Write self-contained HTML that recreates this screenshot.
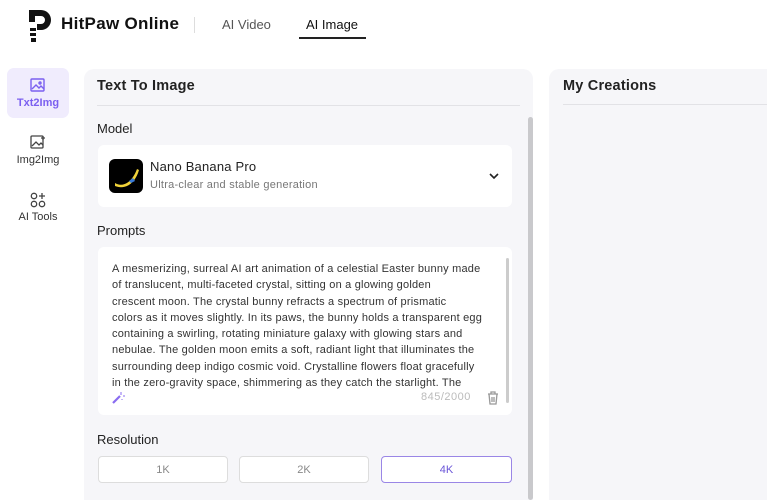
<!DOCTYPE html>
<html><head><meta charset="utf-8"><style>
*{box-sizing:border-box;margin:0;padding:0}
html,body{width:767px;height:500px;overflow:hidden}
body{background:#fff;font-family:"Liberation Sans",sans-serif;position:relative;color:#222}
.a{position:absolute}
</style></head><body>
<svg class="a" style="left:27px;top:8px" width="26" height="36" viewBox="0 0 26 36"><path d="M2 2h12a10 10 0 0 1 0 20h-4v-6h4a4 4 0 0 0 0-8H8v6H2z" fill="#111"/><path d="M3 20h6v3H3zM3 25h6v3H3zM4 30h5v4H4z" fill="#111"/></svg>
<div class="a" style="left:61px;top:14px;font-size:17px;font-weight:bold;color:#111;letter-spacing:0.3px">HitPaw Online</div>
<div class="a" style="left:194px;top:17px;width:1px;height:16px;background:#ddd"></div>
<div class="a" style="left:222px;top:17px;font-size:13px;color:#555">AI Video</div>
<div class="a" style="left:306px;top:17px;font-size:13px;color:#111">AI Image</div>
<div class="a" style="left:299px;top:37px;width:67px;height:2px;background:#222"></div>
<div class="a" style="left:7px;top:68px;width:62px;height:50px;background:#f0ecfd;border-radius:7px"></div>
<svg class="a" style="left:30px;top:78px" width="16" height="14" viewBox="0 0 16 14" fill="none" stroke="#7b5ff0" stroke-width="1.4"><rect x="1" y="1" width="13" height="12" rx="1"/><path d="M2 11l4-4 3 3 2-2 3 3"/><circle cx="10" cy="5" r="1"/></svg>
<div class="a" style="left:7px;top:97px;width:62px;text-align:center;font-size:11px;font-weight:bold;color:#7b5ff0">Txt2Img</div>
<svg class="a" style="left:30px;top:135px" width="16" height="14" viewBox="0 0 16 14" fill="none" stroke="#444" stroke-width="1.3"><rect x="1" y="1" width="12" height="12" rx="1"/><path d="M2 11l4-4 3 3 2-2 2 2"/><path d="M13 1v4M11 3h4"/></svg>
<div class="a" style="left:7px;top:154px;width:62px;text-align:center;font-size:11px;color:#333">Img2Img</div>
<svg class="a" style="left:30px;top:192px" width="16" height="16" viewBox="0 0 16 16" fill="none" stroke="#444" stroke-width="1.3"><circle cx="4" cy="4" r="2.7"/><circle cx="4" cy="12" r="2.7"/><circle cx="12" cy="12" r="2.7"/><path d="M12 1v6M9 4h6"/></svg>
<div class="a" style="left:7px;top:211px;width:62px;text-align:center;font-size:11px;color:#333">AI Tools</div>
<div class="a" style="left:84px;top:69px;width:449px;height:440px;background:#f6f6f9;border-radius:10px"></div>
<div class="a" style="left:97px;top:78px;font-size:14.5px;font-weight:bold;color:#222;letter-spacing:0.2px">Text To Image</div>
<div class="a" style="left:97px;top:105px;width:423px;height:1px;background:#e2e2e6"></div>
<div class="a" style="left:528px;top:117px;width:5px;height:383px;background:#c9c9cc;border-radius:3px"></div>
<div class="a" style="left:97px;top:121px;font-size:13px;color:#222">Model</div>
<div class="a" style="left:98px;top:145px;width:414px;height:62px;background:#fff;border-radius:6px"></div>
<div class="a" style="left:109px;top:159px;width:34px;height:34px;background:#000;border-radius:6px;overflow:hidden"><svg width="34" height="34" viewBox="0 0 34 34"><path d="M6 24c6 4 16 2 22-14l2 1c-4 14-14 20-24 16z" fill="#f1d33a"/><path d="M20 22l4-3 2 3-4 2z" fill="#3a7ad8"/></svg></div>
<div class="a" style="left:150px;top:159px;font-size:13px;color:#222;letter-spacing:0.2px">Nano Banana Pro</div>
<div class="a" style="left:150px;top:179px;font-size:11px;color:#777;letter-spacing:0.25px">Ultra-clear and stable generation</div>
<svg class="a" style="left:489px;top:173px" width="10" height="7" viewBox="0 0 10 7" fill="none" stroke="#222" stroke-width="1.6"><path d="M1 1l4 4 4-4"/></svg>
<div class="a" style="left:97px;top:223px;font-size:13px;color:#222">Prompts</div>
<div class="a" style="left:98px;top:247px;width:414px;height:168px;background:#fff;border-radius:6px"></div>
<div class="a" style="left:112px;top:261px;width:392px;font-size:11px;line-height:16.3px;color:#333;letter-spacing:0.2px">A mesmerizing, surreal AI art animation of a celestial Easter bunny made<br>of translucent, multi-faceted crystal, sitting on a glowing golden<br>crescent moon. The crystal bunny refracts a spectrum of prismatic<br>colors as it moves slightly. In its paws, the bunny holds a transparent egg<br>containing a swirling, rotating miniature galaxy with glowing stars and<br>nebulae. The golden moon emits a soft, radiant light that illuminates the<br>surrounding deep indigo cosmic void. Crystalline flowers float gracefully<br>in the zero-gravity space, shimmering as they catch the starlight. The</div>
<div class="a" style="left:506px;top:258px;width:3px;height:145px;background:#ccc;border-radius:2px"></div>
<svg class="a" style="left:111px;top:391px" width="14" height="14" viewBox="0 0 14 14"><path d="M2 12l7-7" stroke="#8a6cf0" stroke-width="2.2"/><path d="M10 1v3M12 5h2M11 8v1" stroke="#8a6cf0" stroke-width="1"/></svg>
<div class="a" style="left:421px;top:391px;font-size:11px;color:#bbb;letter-spacing:0.5px">845/2000</div>
<svg class="a" style="left:487px;top:391px" width="12" height="14" viewBox="0 0 12 14" fill="none" stroke="#999" stroke-width="1.3"><path d="M1 3h10M4 3V1h4v2M2 3l1 10h6l1-10M5 6v5M7 6v5"/></svg>
<div class="a" style="left:97px;top:432px;font-size:13px;color:#222">Resolution</div>
<div class="a" style="left:98px;top:456px;width:130px;height:27px;background:#fff;border:1px solid #ddd;border-radius:4px;text-align:center;line-height:27px;font-size:11px;color:#888">1K</div>
<div class="a" style="left:239px;top:456px;width:130px;height:27px;background:#fff;border:1px solid #ddd;border-radius:4px;text-align:center;line-height:27px;font-size:11px;color:#888">2K</div>
<div class="a" style="left:381px;top:456px;width:131px;height:27px;background:#fff;border:1px solid #9a86e6;border-radius:4px;text-align:center;line-height:27px;font-size:11px;color:#6a55d8">4K</div>
<div class="a" style="left:549px;top:69px;width:240px;height:440px;background:#f6f6f9;border-radius:10px"></div>
<div class="a" style="left:563px;top:78px;font-size:14.5px;font-weight:bold;color:#222;letter-spacing:0.2px">My Creations</div>
<div class="a" style="left:563px;top:104px;width:204px;height:1px;background:#e2e2e6"></div>
</body></html>
